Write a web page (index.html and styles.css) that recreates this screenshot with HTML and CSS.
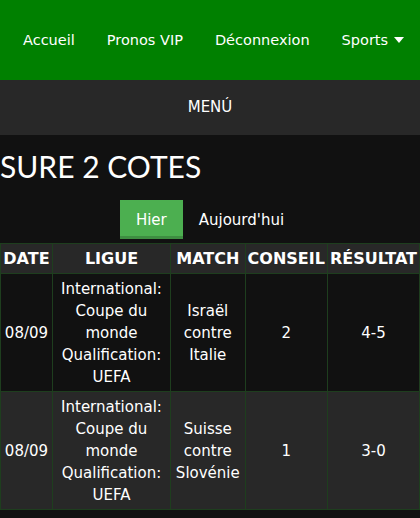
FILE: index.html
```html
<!DOCTYPE html>
<html lang="fr">
<head>
  <meta charset="UTF-8" />
  <meta name="viewport" content="width=device-width, initial-scale=1.0" />
  <title>Sure 2 cotes</title>
  <link rel="stylesheet" href="styles.css">
</head>
<body>
  <nav class="topnav">
    <a href="#">Accueil</a>
    <a href="#">Pronos VIP</a>
    <a href="#">Déconnexion</a>
    <a href="#" class="dropdown">Sports <span class="caret"></span></a>
  </nav>
  <div class="menu-bar">MENÚ</div>

  <h1>SURE 2 COTES</h1>

  <div class="tabs">
    <button class="tab active">Hier</button>
    <button class="tab">Aujourd'hui</button>
  </div>

  <table>
    <colgroup>
      <col class="c-date" /><col class="c-ligue" /><col class="c-match" /><col class="c-conseil" /><col class="c-res" />
    </colgroup>
    <thead>
      <tr><th>DATE</th><th>LIGUE</th><th>MATCH</th><th>CONSEIL</th><th>RÉSULTAT</th></tr>
    </thead>
    <tbody>
      <tr>
        <td>08/09</td>
        <td>International:<br/>Coupe du<br/>monde<br/>Qualification:<br/>UEFA</td>
        <td>Israël<br/>contre<br/>Italie</td>
        <td>2</td>
        <td>4-5</td>
      </tr>
      <tr>
        <td>08/09</td>
        <td>International:<br/>Coupe du<br/>monde<br/>Qualification:<br/>UEFA</td>
        <td>Suisse<br/>contre<br/>Slovénie</td>
        <td>1</td>
        <td>3-0</td>
      </tr>
    </tbody>
  </table>
</body>
</html>
```

FILE: styles.css
```css
body {
  margin: 0;
  background-color: #111;
  color: #fff;
  font-family: "DejaVu Sans", Verdana, sans-serif;
  font-size: 15px;
}
.topnav {
  background-color: #008000;
  height: 80px;
  display: flex;
  align-items: center;
  padding: 0 7px;
  white-space: nowrap;
}
.topnav a {
  color: #fff;
  text-decoration: none;
  padding: 0 16px;
  font-size: 14.5px;
  flex-shrink: 0;
}
.caret {
  display: inline-block;
  width: 0;
  height: 0;
  margin-left: 1px;
  border-left: 5px solid transparent;
  border-right: 5px solid transparent;
  border-top: 6px solid #fff;
  vertical-align: 2px;
}
.menu-bar {
  background-color: #282828;
  height: 55px;
  line-height: 55px;
  text-align: center;
}
h1 {
  font-family: Lato, "Open Sans", sans-serif;
  font-weight: normal;
  font-size: 30px;
  line-height: 41px;
  margin: 11px 0 13px;
}
.tabs {
  display: flex;
  justify-content: center;
  margin-bottom: 4px;
}
.tab {
  background: none;
  border: none;
  color: #fff;
  font-family: inherit;
  font-size: 15px;
  padding: 0 16px;
  height: 39px;
}
.tab.active {
  background-color: #4caf50;
  border-bottom: 3px solid #3e8e41;
  padding-top: 3px;
}
table {
  width: 100%;
  border-collapse: collapse;
}
th, td {
  border: 1px solid #1e3e1e;
  padding: 4px 2px 3px;
  line-height: 22px;
  text-align: center;
}
th {
  background-color: #282828;
  font-size: 16px;
}
tbody tr:nth-child(even) {
  background-color: #282828;
}
.c-date { width: 52px; }
.c-ligue { width: 119px; }
.c-match { width: 75px; }
.c-conseil { width: 81px; }
```
